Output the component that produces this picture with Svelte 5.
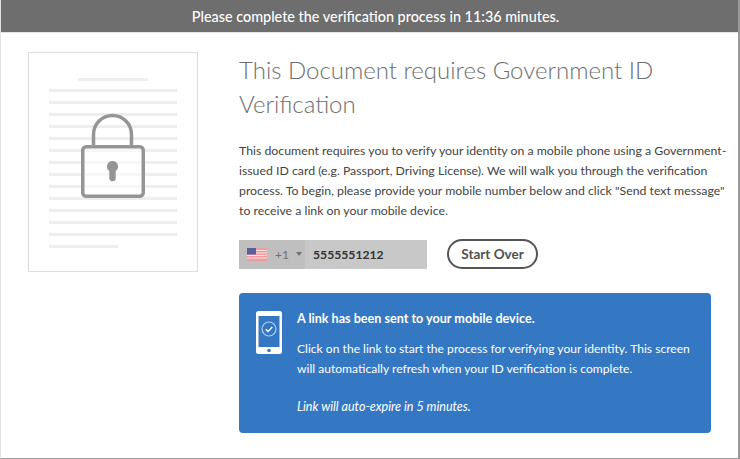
<script>
    let minutes = "11:36";
    const docLines = [0, 1, 2, 3, 4, 5, 6, 7, 8, 9, 10, 11, 12];
</script>

<div class="page">
    <div class="banner">Please complete the verification process in {minutes} minutes.</div>
    <div class="content">
        <div class="doc">
            <div class="doc-title"></div>
            {#each docLines as n}
                <div class="doc-line"></div>
            {/each}
            <div class="doc-line short"></div>
            <svg class="lock" viewBox="0 0 64 86" width="64" height="86" fill="none" stroke="#959595" stroke-width="3.5">
                <path d="M12.500 33V21.500a19 19 0 0 1 38 0V33" />
                <rect x="1.750" y="33.750" width="60.500" height="49.500" rx="3.500" fill="rgba(255,255,255,0.55)" />
                <path d="M31.500 48a5.500 5.500 0 0 1 3.200 10V65a3.200 3.200 0 0 1-6.400 0v-7a5.500 5.500 0 0 1 3.200-10z" fill="#959595" stroke="none" />
            </svg>
        </div>
        <div class="main">
            <h1>This Document requires Government ID Verification</h1>
            <p class="intro">This document requires you to verify your identity on a mobile phone using a Government-issued ID card (e.g. Passport, Driving License). We will walk you through the verification process. To begin, please provide your mobile number below and click "Send text message" to receive a link on your mobile device.</p>
            <div class="phone-row">
                <div class="phone-input">
                    <div class="country">
                        <svg class="flag" viewBox="0 0 20 13" width="20" height="13">
                            <rect width="20" height="13" fill="#ee9aa0" />
                            <path d="M0 2.500h20M0 5h20M0 7.500h20M0 10h20" stroke="#f4e6e6" stroke-width="1.200" />
                            <rect width="9" height="6.500" fill="#5a5f99" />
                        </svg>
                        <span class="code">+1</span>
                        <span class="caret"></span>
                    </div>
                    <span class="number">5555551212</span>
                </div>
                <button class="over">Start Over</button>
            </div>
            <div class="notice">
                <svg class="device" viewBox="0 0 26 43" width="26" height="43">
                    <rect width="26" height="43" rx="2.500" fill="#fff" />
                    <rect x="2.500" y="5" width="21" height="31" fill="#3478c4" />
                    <circle cx="13" cy="39.500" r="1.800" fill="#3478c4" />
                    <circle cx="13" cy="18" r="7" fill="none" stroke="#b5cfea" stroke-width="1.200" />
                    <path d="M9.800 18.200l2.300 2.300 4.200-4.500" fill="none" stroke="#fff" stroke-width="1.300" />
                </svg>
                <div class="notice-text">
                    <strong>A link has been sent to your mobile device.</strong>
                    <p>Click on the link to start the process for verifying your identity. This screen will automatically refresh when your ID verification is complete.</p>
                    <em>Link will auto-expire in 5 minutes.</em>
                </div>
            </div>
        </div>
    </div>
</div>

<style>
    :global(body) {
        margin: 0;
        background: #fff;
    }
    .page {
        box-sizing: border-box;
        width: 740px;
        height: 459px;
        border-left: 1px solid #e2e2e2;
        border-right: 2px solid #9a9a9a;
        border-bottom: 1px solid #9a9a9a;
        font-family: "Lato", "Open Sans", sans-serif;
        overflow: hidden;
    }
    .banner {
        box-sizing: border-box;
        height: 33px;
        padding-left: 12px;
        line-height: 33px;
        background: #6e6e6e;
        color: #fff;
        text-align: center;
        font-size: 14.400px;
        font-weight: 500;
        border-bottom: 1px solid #e4e4e4;
    }
    .content {
        display: flex;
        align-items: flex-start;
        padding: 19px 0 0 27px;
    }
    .doc {
        position: relative;
        box-sizing: border-box;
        width: 170px;
        height: 220px;
        flex: none;
        border: 1px solid #dcdcdc;
        padding: 25px 20px 0;
    }
    .doc-title {
        width: 70px;
        height: 3px;
        margin: 0 auto 8px;
        background: #efefef;
    }
    .doc-line {
        height: 3px;
        margin-bottom: 9px;
        background: #eeeeee;
    }
    .doc-line.short {
        width: 69px;
    }
    .lock {
        position: absolute;
        left: 52px;
        top: 60px;
    }
    .main {
        margin-left: 41px;
        width: 490px;
    }
    h1 {
        margin: 1px 0 0;
        font-weight: 300;
        font-size: 24px;
        line-height: 34px;
        color: #6e6e6e;
    }
    .intro {
        margin: 20px 0 0;
        font-size: 12.300px;
        line-height: 20px;
        color: #444;
    }
    .phone-row {
        display: flex;
        align-items: center;
        margin-top: 18px;
        gap: 20px;
    }
    .phone-input {
        display: flex;
        align-items: center;
        width: 188px;
        height: 29px;
        background: #c8c8c8;
    }
    .country {
        display: flex;
        align-items: center;
        box-sizing: border-box;
        width: 66px;
        height: 100%;
        padding-left: 8px;
        background: #bfbfbf;
    }
    .code {
        margin-left: 8px;
        font-size: 12px;
        color: #707070;
    }
    .caret {
        margin-left: 7px;
        border: 3px solid transparent;
        border-top: 4px solid #707070;
        border-bottom: 0;
    }
    .number {
        margin-left: 8px;
        font-size: 12.200px;
        font-weight: 700;
        color: #333;
    }
    .over {
        box-sizing: border-box;
        width: 91px;
        height: 30px;
        padding: 0;
        background: #fff;
        border: 2px solid #555;
        border-radius: 15px;
        font-family: inherit;
        font-size: 13.500px;
        font-weight: 700;
        color: #505050;
    }
    .notice {
        display: flex;
        box-sizing: border-box;
        width: 472px;
        height: 140px;
        margin-top: 24px;
        padding: 16px 10px 0 17px;
        gap: 15px;
        background: #3478c4;
        border-radius: 4px;
        color: #fff;
        font-size: 12.100px;
        line-height: 20px;
    }
    .device {
        flex: none;
        margin-top: 2px;
    }
    .notice-text strong {
        display: block;
        font-size: 12.600px;
        font-weight: 700;
    }
    .notice-text p {
        margin: 10px 0 18px;
    }
    .notice-text em {
        font-size: 12.500px;
    }
</style>
